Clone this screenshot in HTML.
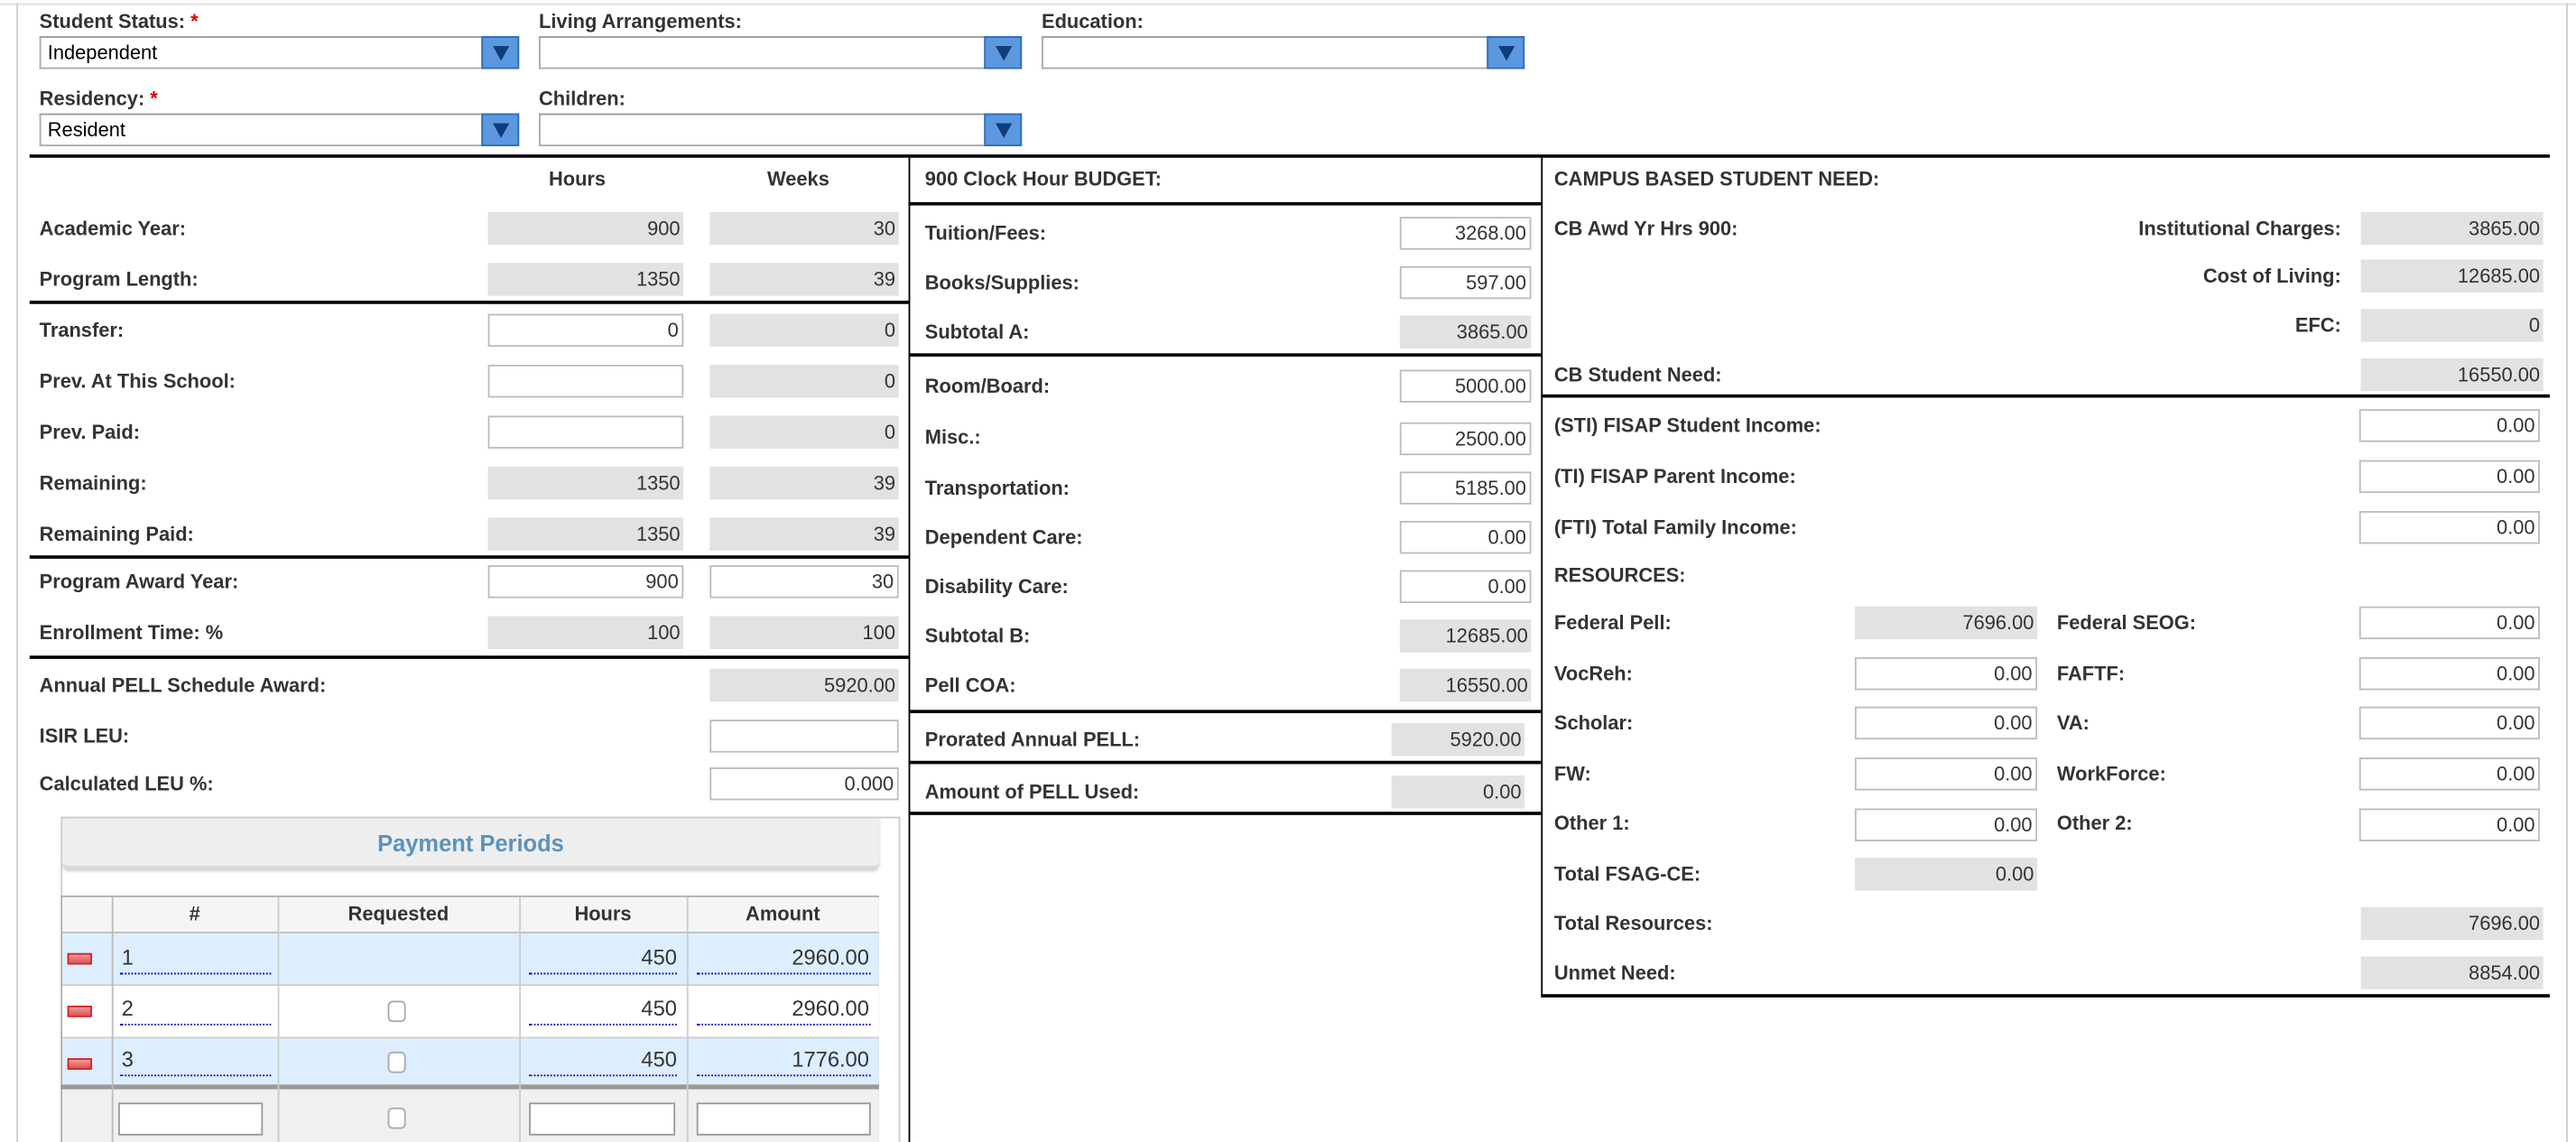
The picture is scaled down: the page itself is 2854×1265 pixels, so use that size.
<!DOCTYPE html>
<html><head><meta charset="utf-8">
<style>
html,body{margin:0;padding:0;background:#fff;width:2854px;height:1264px;overflow:hidden}
#w{position:absolute;left:0;top:0;width:1568px;height:695px;transform:scale(1.8202);transform-origin:0 0;font-family:"Liberation Sans",Arial,sans-serif}
.l{position:absolute;font-weight:bold;font-size:12px;color:#333;line-height:14px;white-space:nowrap}
.r{text-align:right}
.g,.i{position:absolute;height:20px;box-sizing:border-box;font-size:12px;color:#333;text-align:right;padding-right:2px;line-height:20px}
.g{background:#e2e2e2}
.i{background:#fff;border:1px solid #bcbcbc;line-height:18px}
.hl{position:absolute;height:2px;background:#000}
.vl{position:absolute;width:1px;background:#000}
.req{color:#d00}
.sel{position:absolute;height:20px;box-sizing:border-box;border:1px solid #aaa;border-top-color:#999;background:#fff;font-size:12px;line-height:18px;padding-left:4px;color:#000}
.sel .a{position:absolute;right:-1px;top:-1px;width:23px;height:20px;box-sizing:border-box;background:#5c98e0;border:1px solid #2f6bbd}
.sel .a:after{content:"";position:absolute;left:6px;top:5px;border-left:5px solid transparent;border-right:5px solid transparent;border-top:9px solid #0f3d7a}
.c{position:absolute;box-sizing:border-box;font-size:12px;color:#333}
.ul{position:absolute;height:0;border-bottom:1px dotted #00c}
.cb{position:absolute;width:11px;height:13px;box-sizing:border-box;border:1px solid #aaa;border-radius:3px;background:#fff}
.mi{position:absolute;left:41px;width:15px;height:7px;box-sizing:border-box;border:1px solid #d21d1d;background:linear-gradient(#f59a9a,#e25050)}
</style></head><body><div id="w">
<div style="position:absolute;left:0;top:2px;width:1568px;height:1px;background:#ddd"></div>
<div style="position:absolute;left:10px;top:2px;width:1px;height:693px;background:#ccc"></div>
<div style="position:absolute;left:1562px;top:2px;width:1px;height:693px;background:#ccc"></div>

<div class="l" style="left:24px;top:6px">Student Status: <span class="req">*</span></div>
<div class="sel" style="left:24px;top:22px;width:292px">Independent<div class="a"></div></div>
<div class="l" style="left:328px;top:6px">Living Arrangements:</div>
<div class="sel" style="left:328px;top:22px;width:294px"><div class="a"></div></div>
<div class="l" style="left:634px;top:6px">Education:</div>
<div class="sel" style="left:634px;top:22px;width:294px"><div class="a"></div></div>
<div class="l" style="left:24px;top:53px">Residency: <span class="req">*</span></div>
<div class="sel" style="left:24px;top:69px;width:292px">Resident<div class="a"></div></div>
<div class="l" style="left:328px;top:53px">Children:</div>
<div class="sel" style="left:328px;top:69px;width:294px"><div class="a"></div></div>

<div class="hl" style="left:18px;top:94px;width:1534px"></div>
<div class="vl" style="left:553px;top:96px;height:599px"></div>
<div class="vl" style="left:938px;top:96px;height:511px"></div>

<!-- left column -->
<div class="l" style="left:334px;top:102px">Hours</div>
<div class="l" style="left:467px;top:102px">Weeks</div>
<div class="l" style="left:24px;top:132px">Academic Year:</div><div class="g" style="left:297px;top:129px;width:119px">900</div><div class="g" style="left:432px;top:129px;width:115px">30</div>
<div class="l" style="left:24px;top:163px">Program Length:</div><div class="g" style="left:297px;top:160px;width:119px">1350</div><div class="g" style="left:432px;top:160px;width:115px">39</div>
<div class="hl" style="left:18px;top:183px;width:535px"></div>
<div class="l" style="left:24px;top:194px">Transfer:</div><div class="i" style="left:297px;top:191px;width:119px">0</div><div class="g" style="left:432px;top:191px;width:115px">0</div>
<div class="l" style="left:24px;top:225px">Prev. At This School:</div><div class="i" style="left:297px;top:222px;width:119px"></div><div class="g" style="left:432px;top:222px;width:115px">0</div>
<div class="l" style="left:24px;top:256px">Prev. Paid:</div><div class="i" style="left:297px;top:253px;width:119px"></div><div class="g" style="left:432px;top:253px;width:115px">0</div>
<div class="l" style="left:24px;top:287px">Remaining:</div><div class="g" style="left:297px;top:284px;width:119px">1350</div><div class="g" style="left:432px;top:284px;width:115px">39</div>
<div class="l" style="left:24px;top:318px">Remaining Paid:</div><div class="g" style="left:297px;top:315px;width:119px">1350</div><div class="g" style="left:432px;top:315px;width:115px">39</div>
<div class="hl" style="left:18px;top:338px;width:535px"></div>
<div class="l" style="left:24px;top:347px">Program Award Year:</div><div class="i" style="left:297px;top:344px;width:119px">900</div><div class="i" style="left:432px;top:344px;width:115px">30</div>
<div class="l" style="left:24px;top:378px">Enrollment Time: %</div><div class="g" style="left:297px;top:375px;width:119px">100</div><div class="g" style="left:432px;top:375px;width:115px">100</div>
<div class="hl" style="left:18px;top:399px;width:535px"></div>
<div class="l" style="left:24px;top:410px">Annual PELL Schedule Award:</div><div class="g" style="left:432px;top:407px;width:115px">5920.00</div>
<div class="l" style="left:24px;top:441px">ISIR LEU:</div><div class="i" style="left:432px;top:438px;width:115px"></div>
<div class="l" style="left:24px;top:470px">Calculated LEU %:</div><div class="i" style="left:432px;top:467px;width:115px">0.000</div>

<!-- payment periods -->
<div style="position:absolute;left:37px;top:497px;width:511px;height:198px;box-sizing:border-box;border:1px solid #ccc;border-bottom:none"></div>
<div style="position:absolute;left:38px;top:498px;width:497px;height:29px;background:#eee;border-bottom:2px solid #d8d8d8;border-radius:0 0 4px 4px;box-shadow:0 1px 2px #ccc;text-align:center;font-weight:bold;font-size:14px;color:#5b93bd;line-height:30px">Payment Periods</div>
<div style="position:absolute;left:37px;top:545px;width:498px;height:150px;border:1px solid #aaa;border-bottom:none;box-sizing:border-box;background:#fff"></div>
<div style="position:absolute;left:38px;top:546px;width:497px;height:21px;background:#f5f5f5;border-bottom:1px solid #bbb"></div>
<div style="position:absolute;left:38px;top:568px;width:497px;height:31px;background:#ddeeff;border-bottom:1px solid #ccc"></div>
<div style="position:absolute;left:38px;top:600px;width:497px;height:31px;background:#fff;border-bottom:1px solid #ccc"></div>
<div style="position:absolute;left:38px;top:632px;width:497px;height:28px;background:#ddeeff"></div>
<div style="position:absolute;left:37px;top:660px;width:498px;height:3px;background:#999"></div>
<div style="position:absolute;left:38px;top:663px;width:497px;height:32px;background:#f0f0f0"></div>
<div class="vl" style="left:68px;top:546px;height:149px;background:#bbb"></div>
<div class="vl" style="left:169px;top:546px;height:149px;background:#ccc"></div>
<div class="vl" style="left:316px;top:546px;height:149px;background:#ccc"></div>
<div class="vl" style="left:418px;top:546px;height:149px;background:#ccc"></div>
<div class="l" style="left:68px;width:101px;top:549px;text-align:center">#</div>
<div class="l" style="left:169px;width:147px;top:549px;text-align:center">Requested</div>
<div class="l" style="left:316px;width:102px;top:549px;text-align:center">Hours</div>
<div class="l" style="left:418px;width:117px;top:549px;text-align:center">Amount</div>
<div class="mi" style="top:580px"></div><div class="mi" style="top:612px"></div><div class="mi" style="top:644px"></div>
<div class="c" style="left:74px;top:575px;font-size:13px">1</div><div class="ul" style="left:73px;top:592px;width:92px"></div>
<div class="c" style="left:322px;width:90px;top:575px;text-align:right;font-size:13px">450</div><div class="ul" style="left:322px;top:592px;width:90px"></div>
<div class="c" style="left:424px;width:105px;top:575px;text-align:right;font-size:13px">2960.00</div><div class="ul" style="left:424px;top:592px;width:106px"></div>
<div class="c" style="left:74px;top:606px;font-size:13px">2</div><div class="ul" style="left:73px;top:623px;width:92px"></div>
<div class="cb" style="left:236px;top:609px"></div>
<div class="c" style="left:322px;width:90px;top:606px;text-align:right;font-size:13px">450</div><div class="ul" style="left:322px;top:623px;width:90px"></div>
<div class="c" style="left:424px;width:105px;top:606px;text-align:right;font-size:13px">2960.00</div><div class="ul" style="left:424px;top:623px;width:106px"></div>
<div class="c" style="left:74px;top:637px;font-size:13px">3</div><div class="ul" style="left:73px;top:654px;width:92px"></div>
<div class="cb" style="left:236px;top:640px"></div>
<div class="c" style="left:322px;width:90px;top:637px;text-align:right;font-size:13px">450</div><div class="ul" style="left:322px;top:654px;width:90px"></div>
<div class="c" style="left:424px;width:105px;top:637px;text-align:right;font-size:13px">1776.00</div><div class="ul" style="left:424px;top:654px;width:106px"></div>
<div class="i" style="left:72px;top:671px;width:88px;border-color:#999"></div>
<div class="cb" style="left:236px;top:674px"></div>
<div class="i" style="left:322px;top:671px;width:89px;border-color:#999"></div>
<div class="i" style="left:424px;top:671px;width:106px;border-color:#999"></div>

<!-- middle column -->
<div class="l" style="left:563px;top:102px">900 Clock Hour BUDGET:</div>
<div class="hl" style="left:553px;top:123px;width:385px"></div>
<div class="l" style="left:563px;top:135px">Tuition/Fees:</div><div class="i" style="left:852px;top:132px;width:80px">3268.00</div>
<div class="l" style="left:563px;top:165px">Books/Supplies:</div><div class="i" style="left:852px;top:162px;width:80px">597.00</div>
<div class="l" style="left:563px;top:195px">Subtotal A:</div><div class="g" style="left:852px;top:192px;width:80px">3865.00</div>
<div class="hl" style="left:553px;top:215px;width:385px"></div>
<div class="l" style="left:563px;top:228px">Room/Board:</div><div class="i" style="left:852px;top:225px;width:80px">5000.00</div>
<div class="l" style="left:563px;top:259px">Misc.:</div><div class="i" style="left:852px;top:257px;width:80px">2500.00</div>
<div class="l" style="left:563px;top:290px">Transportation:</div><div class="i" style="left:852px;top:287px;width:80px">5185.00</div>
<div class="l" style="left:563px;top:320px">Dependent Care:</div><div class="i" style="left:852px;top:317px;width:80px">0.00</div>
<div class="l" style="left:563px;top:350px">Disability Care:</div><div class="i" style="left:852px;top:347px;width:80px">0.00</div>
<div class="l" style="left:563px;top:380px">Subtotal B:</div><div class="g" style="left:852px;top:377px;width:80px">12685.00</div>
<div class="l" style="left:563px;top:410px">Pell COA:</div><div class="g" style="left:852px;top:407px;width:80px">16550.00</div>
<div class="hl" style="left:553px;top:432px;width:385px"></div>
<div class="l" style="left:563px;top:443px">Prorated Annual PELL:</div><div class="g" style="left:847px;top:440px;width:81px">5920.00</div>
<div class="hl" style="left:553px;top:463px;width:385px"></div>
<div class="l" style="left:563px;top:475px">Amount of PELL Used:</div><div class="g" style="left:847px;top:472px;width:81px">0.00</div>
<div class="hl" style="left:553px;top:494px;width:385px"></div>

<!-- right column -->
<div class="l" style="left:946px;top:102px">CAMPUS BASED STUDENT NEED:</div>
<div class="l" style="left:946px;top:132px">CB Awd Yr Hrs 900:</div>
<div class="l r" style="left:1200px;width:225px;top:132px">Institutional Charges:</div><div class="g" style="left:1437px;top:129px;width:111px">3865.00</div>
<div class="l r" style="left:1200px;width:225px;top:161px">Cost of Living:</div><div class="g" style="left:1437px;top:158px;width:111px">12685.00</div>
<div class="l r" style="left:1200px;width:225px;top:191px">EFC:</div><div class="g" style="left:1437px;top:188px;width:111px">0</div>
<div class="l" style="left:946px;top:221px">CB Student Need:</div><div class="g" style="left:1437px;top:218px;width:111px">16550.00</div>
<div class="hl" style="left:938px;top:240px;width:614px"></div>
<div class="l" style="left:946px;top:252px">(STI) FISAP Student Income:</div><div class="i" style="left:1436px;top:249px;width:110px">0.00</div>
<div class="l" style="left:946px;top:283px">(TI) FISAP Parent Income:</div><div class="i" style="left:1436px;top:280px;width:110px">0.00</div>
<div class="l" style="left:946px;top:314px">(FTI) Total Family Income:</div><div class="i" style="left:1436px;top:311px;width:110px">0.00</div>
<div class="l" style="left:946px;top:343px">RESOURCES:</div>
<div class="l" style="left:946px;top:372px">Federal Pell:</div><div class="g" style="left:1129px;top:369px;width:111px">7696.00</div>
<div class="l" style="left:1252px;top:372px">Federal SEOG:</div><div class="i" style="left:1436px;top:369px;width:110px">0.00</div>
<div class="l" style="left:946px;top:403px">VocReh:</div><div class="i" style="left:1129px;top:400px;width:111px">0.00</div>
<div class="l" style="left:1252px;top:403px">FAFTF:</div><div class="i" style="left:1436px;top:400px;width:110px">0.00</div>
<div class="l" style="left:946px;top:433px">Scholar:</div><div class="i" style="left:1129px;top:430px;width:111px">0.00</div>
<div class="l" style="left:1252px;top:433px">VA:</div><div class="i" style="left:1436px;top:430px;width:110px">0.00</div>
<div class="l" style="left:946px;top:464px">FW:</div><div class="i" style="left:1129px;top:461px;width:111px">0.00</div>
<div class="l" style="left:1252px;top:464px">WorkForce:</div><div class="i" style="left:1436px;top:461px;width:110px">0.00</div>
<div class="l" style="left:946px;top:494px">Other 1:</div><div class="i" style="left:1129px;top:492px;width:111px">0.00</div>
<div class="l" style="left:1252px;top:494px">Other 2:</div><div class="i" style="left:1436px;top:492px;width:110px">0.00</div>
<div class="l" style="left:946px;top:525px">Total FSAG-CE:</div><div class="g" style="left:1129px;top:522px;width:111px">0.00</div>
<div class="l" style="left:946px;top:555px">Total Resources:</div><div class="g" style="left:1437px;top:552px;width:111px">7696.00</div>
<div class="l" style="left:946px;top:585px">Unmet Need:</div><div class="g" style="left:1437px;top:582px;width:111px">8854.00</div>
<div class="hl" style="left:938px;top:605px;width:614px"></div>
</div></body></html>
